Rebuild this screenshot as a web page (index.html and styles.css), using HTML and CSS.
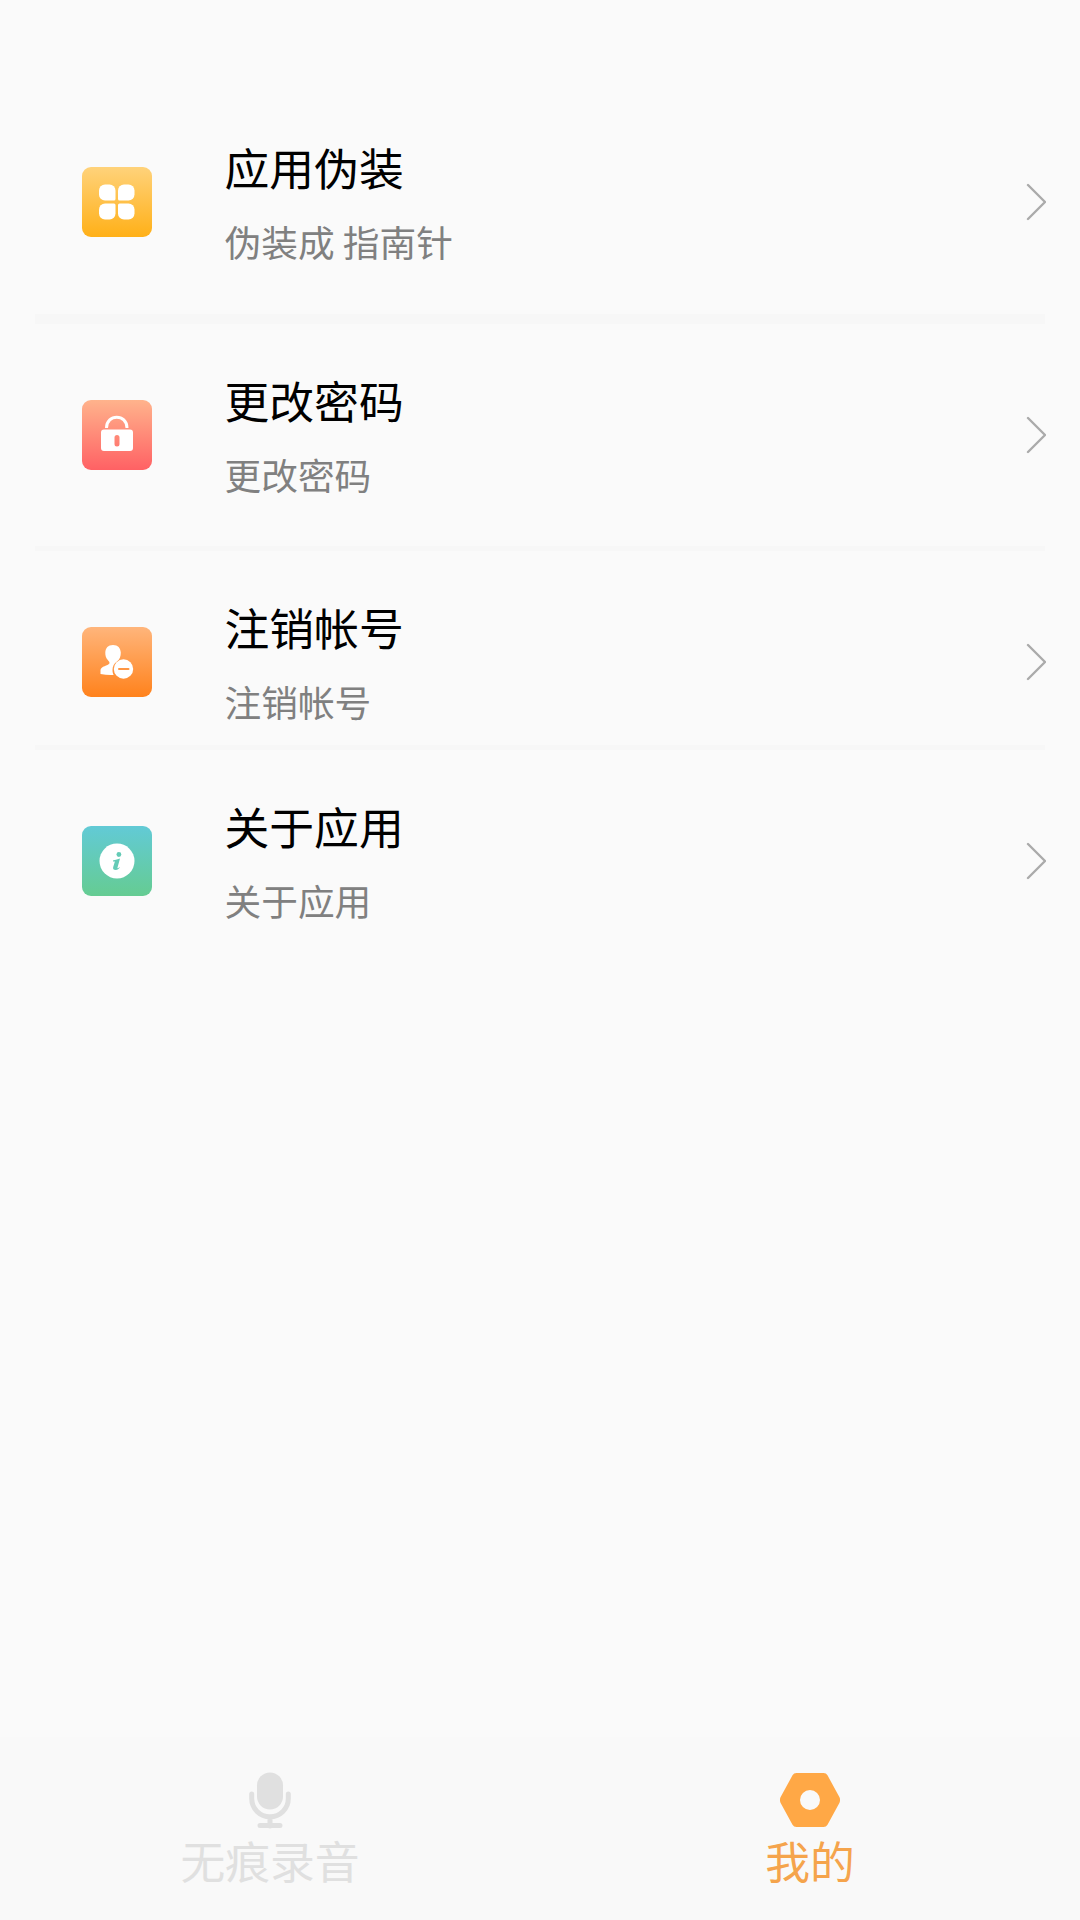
FILE: index.html
```html
<!DOCTYPE html>
<html lang="zh-CN">
<head>
<meta charset="utf-8">
<title>我的</title>
<link rel="stylesheet" href="styles.css">
</head>
<body>
<main class="list">
  <section class="item item-first">
    <svg class="icon" viewBox="0 0 70 70">
      <defs><linearGradient id="g1" x2="0" y2="1"><stop stop-color="#ffd27a"/><stop offset="1" stop-color="#ffb018"/></linearGradient></defs>
      <rect width="70" height="70" rx="9" fill="url(#g1)"/>
      <g fill="#fff">
        <path d="M23 17.500h4.500a6 6 0 0 1 6 6v8.500a1.500 1.500 0 0 1-1.500 1.500h-9a6 6 0 0 1-6-6v-4a6 6 0 0 1 6-6z" id="petal"/>
        <use href="#petal" transform="matrix(-1 0 0 1 69.500 0)"/>
        <use href="#petal" transform="matrix(1 0 0 -1 0 70)"/>
        <use href="#petal" transform="matrix(-1 0 0 -1 69.500 70)"/>
      </g>
    </svg>
    <div class="text"><h2>应用伪装</h2><p>伪装成 指南针</p></div>
    <svg class="arrow" viewBox="0 0 20 38"><path d="M2 2l17 17L2 36"/></svg>
  </section>
  <hr class="thick">
  <section class="item">
    <svg class="icon" viewBox="0 0 70 70">
      <defs><linearGradient id="g2" x2="0" y2="1"><stop stop-color="#ffb38c"/><stop offset="1" stop-color="#ff6164"/></linearGradient></defs>
      <rect width="70" height="70" rx="9" fill="url(#g2)"/>
      <path d="M24.500 28C24.500 13.500 45 13.500 45 28" fill="none" stroke="#fff" stroke-width="3"/>
      <path fill="#fff" fill-rule="evenodd" d="M22 29.500h26q3 0 3 3v15.500q0 3-3 3H22q-3 0-3-3V32.500q0-3 3-3zM35 35q-2.500 0-2.500 2.500v6.500q0 2.500 2.500 2.500t2.500-2.500V37.500Q37.500 35 35 35z"/>
    </svg>
    <div class="text"><h2>更改密码</h2><p>更改密码</p></div>
    <svg class="arrow" viewBox="0 0 20 38"><path d="M2 2l17 17L2 36"/></svg>
  </section>
  <hr>
  <section class="item item-compact">
    <svg class="icon" viewBox="0 0 70 70">
      <defs><linearGradient id="g3" x2="0" y2="1"><stop stop-color="#ffb57b"/><stop offset="1" stop-color="#ff821c"/></linearGradient></defs>
      <rect width="70" height="70" rx="9" fill="url(#g3)"/>
      <path fill="#fff" d="M31 18c5 0 7.500 3 7.800 7.500 .1 4-1.300 7-3.600 8.800C32 36.500 30.500 39.500 30.500 43c0 2 .4 3.700 1.200 5-4.500 .2-9-.1-13.200-1V43c.4-4 7.500-4 8.900-6.500 .5-1.200-.5-2.200-1.600-3.500-1.800-2-2.600-4.500-2.500-7.500C23.500 21 26 18 31 18z"/>
      <circle cx="41.500" cy="42" r="9.700" fill="#fff"/>
      <path d="M37 42h9.500" stroke="#ff9644" stroke-width="2" stroke-linecap="round"/>
    </svg>
    <div class="text"><h2>注销帐号</h2><p>注销帐号</p></div>
    <svg class="arrow" viewBox="0 0 20 38"><path d="M2 2l17 17L2 36"/></svg>
  </section>
  <hr>
  <section class="item item-compact">
    <svg class="icon" viewBox="0 0 70 70">
      <defs><linearGradient id="g4" x2="0" y2="1"><stop stop-color="#62cad6"/><stop offset="1" stop-color="#65cc92"/></linearGradient></defs>
      <rect width="70" height="70" rx="9" fill="url(#g4)"/>
      <circle cx="35" cy="35" r="17.500" fill="#fff"/>
      <g fill="#64cbb6"><circle cx="36.900" cy="28.500" r="2.400"/><path d="M31.200 34.200c2.500-.2 4.500-.9 6.800-1.700l-2.700 9.700c1.200-.1 1.900-.8 2.700-1.500-.6 2-2.300 3.200-4.300 3.200-2.200 0-3-1.200-2.500-3l1.700-5.500-1.900.1z"/></g>
    </svg>
    <div class="text"><h2>关于应用</h2><p>关于应用</p></div>
    <svg class="arrow" viewBox="0 0 20 38"><path d="M2 2l17 17L2 36"/></svg>
  </section>
</main>
<nav class="tabs">
  <a class="tab">
    <svg viewBox="0 0 60 60"><rect x="17" y="2.500" width="26" height="37" rx="13" fill="#e0e0e0"/><path d="M11.700 24v4.500a18.300 18.300 0 0 0 36.600 0V24M30 47v9M20 55.500h20" fill="none" stroke="#e0e0e0" stroke-width="5" stroke-linecap="round"/></svg>
    <span>无痕录音</span>
  </a>
  <a class="tab tab-active">
    <svg viewBox="0 0 60 60"><path fill="#ffa846" fill-rule="evenodd" d="M16.500 3h27q2.700 0 4 2.300l12 22q1.200 2.700 0 5.400l-12 22q-1.300 2.300-4 2.300h-27q-2.700 0-4-2.300l-12-22q-1.200-2.700 0-5.400l12-22Q13.800 3 16.500 3zM30 20a10 10 0 1 0 0 20a10 10 0 1 0 0-20z"/></svg>
    <span>我的</span>
  </a>
</nav>
</body>
</html>
```
FILE: styles.css
```css
* { box-sizing: border-box; margin: 0; }
body {
  display: flex;
  flex-direction: column;
  height: 1920px;
  background: #fafafa;
  font-family: "Noto Sans CJK SC", sans-serif;
}
.list { flex: 1; padding-top: 90px; }
.item {
  display: flex;
  align-items: center;
  height: 222px;
  padding: 0 34px 0 82px;
}
.item-first { height: 224px; }
.item-compact { height: 194px; padding-top: 28px; }
.icon { width: 70px; height: 70px; }
.text { flex: 1; margin-left: 72.5px; padding-bottom: 2px; }
h2 {
  margin-bottom: 3px;
  color: #000;
  font-size: 44.8px;
  font-weight: 400;
  line-height: 77px;
}
p { color: #808080; font-size: 36.7px; line-height: 66px; }
.arrow {
  width: 20px;
  height: 38px;
  fill: none;
  stroke: #aaa;
  stroke-width: 2.4;
  stroke-linecap: round;
  stroke-linejoin: round;
}
hr { height: 5px; margin: 0 35px; border: 0; background: #f7f7f7; }
.thick { height: 10px; }
.tabs { display: flex; height: 183px; background: #f9f9f9; }
.tab {
  display: flex;
  flex: 1;
  flex-direction: column;
  align-items: center;
  padding-top: 33px;
  color: #e0e0e0;
  font-size: 44.8px;
  line-height: 60px;
}
.tab svg { width: 60px; height: 60px; }
.tab-active { color: #f5a44c; }
```
